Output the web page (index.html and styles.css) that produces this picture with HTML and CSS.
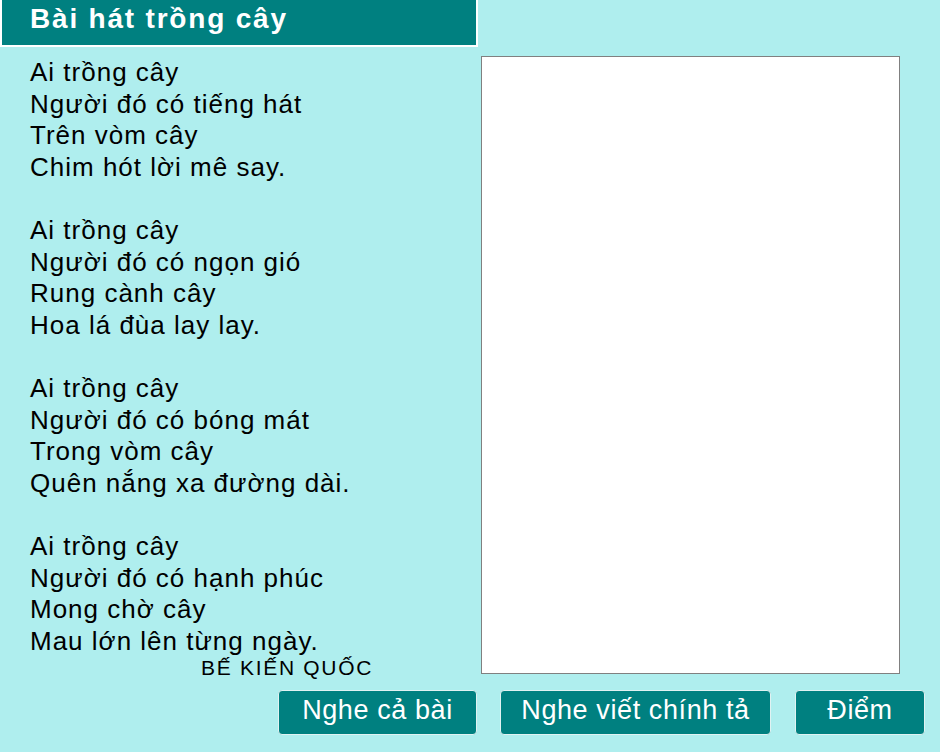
FILE: index.html
```html
<!DOCTYPE html>
<html lang="vi">
<head>
<meta charset="utf-8">
<title>Bài hát trồng cây</title>
<link rel="stylesheet" href="styles.css">
</head>
<body>
<div class="page">
  <div class="header"><h1 class="title">Bài hát trồng cây</h1></div>
  <div class="main">
    <div class="poem">
      <p class="verse">Ai trồng cây<br>Người đó có tiếng hát<br>Trên vòm cây<br>Chim hót lời mê say.</p>
      <p class="verse">Ai trồng cây<br>Người đó có ngọn gió<br>Rung cành cây<br>Hoa lá đùa lay lay.</p>
      <p class="verse">Ai trồng cây<br>Người đó có bóng mát<br>Trong vòm cây<br>Quên nắng xa đường dài.</p>
      <p class="verse">Ai trồng cây<br>Người đó có hạnh phúc<br>Mong chờ cây<br>Mau lớn lên từng ngày.</p>
      <div class="author">BẾ KIẾN QUỐC</div>
    </div>
    <textarea class="answer"></textarea>
  </div>
  <div class="actions">
    <button class="btn btn-full">Nghe cả bài</button>
    <button class="btn btn-dict">Nghe viết chính tả</button>
    <button class="btn btn-score">Điểm</button>
  </div>
</div>
</body>
</html>
```
FILE: styles.css
```css
html, body {
  margin: 0;
  padding: 0;
  background: #afeeee;
  font-family: "Liberation Sans", Arial, sans-serif;
}
.page {
  width: 940px;
  height: 752px;
  display: flex;
  flex-direction: column;
}
.header {
  width: 474px;
  height: 45px;
  background: #008080;
  border: 2px solid #fff;
  border-top: 0;
}
.title {
  margin: 0;
  padding: 1px 0 0 28px;
  color: #fff;
  font-size: 28px;
  font-weight: bold;
  letter-spacing: 1.8px;
  line-height: 36px;
}
.main {
  display: flex;
  justify-content: space-between;
  margin-top: 9px;
  height: 618px;
}
.poem {
  padding: 1px 0 0 30px;
  color: #000;
  font-size: 26px;
  letter-spacing: 1px;
  line-height: 31.6px;
}
.verse {
  margin: 0 0 31.6px 0;
}
.verse:last-of-type {
  margin-bottom: 0;
}
.author {
  font-size: 21px;
  letter-spacing: 1.7px;
  line-height: 22px;
  padding-left: 171px;
}
.answer {
  width: 417px;
  height: 616px;
  margin: 0 40px 0 0;
  padding: 0;
  border: 1px solid #808080;
  background: #fff;
  resize: none;
}
.actions {
  display: flex;
  justify-content: flex-end;
  gap: 24px;
  padding-right: 15px;
  margin-top: 16px;
}
.btn {
  box-sizing: border-box;
  height: 45px;
  background: #008080;
  color: #fff;
  border: 1px solid #e0f2f2;
  border-radius: 4px;
  font-family: "Liberation Sans", Arial, sans-serif;
  font-size: 27px;
  letter-spacing: 0.6px;
  padding: 0 0 5px 0;
}
.btn-full { width: 199px; margin-right: -1px; }
.btn-dict { width: 271px; }
.btn-score { width: 130px; }
```
